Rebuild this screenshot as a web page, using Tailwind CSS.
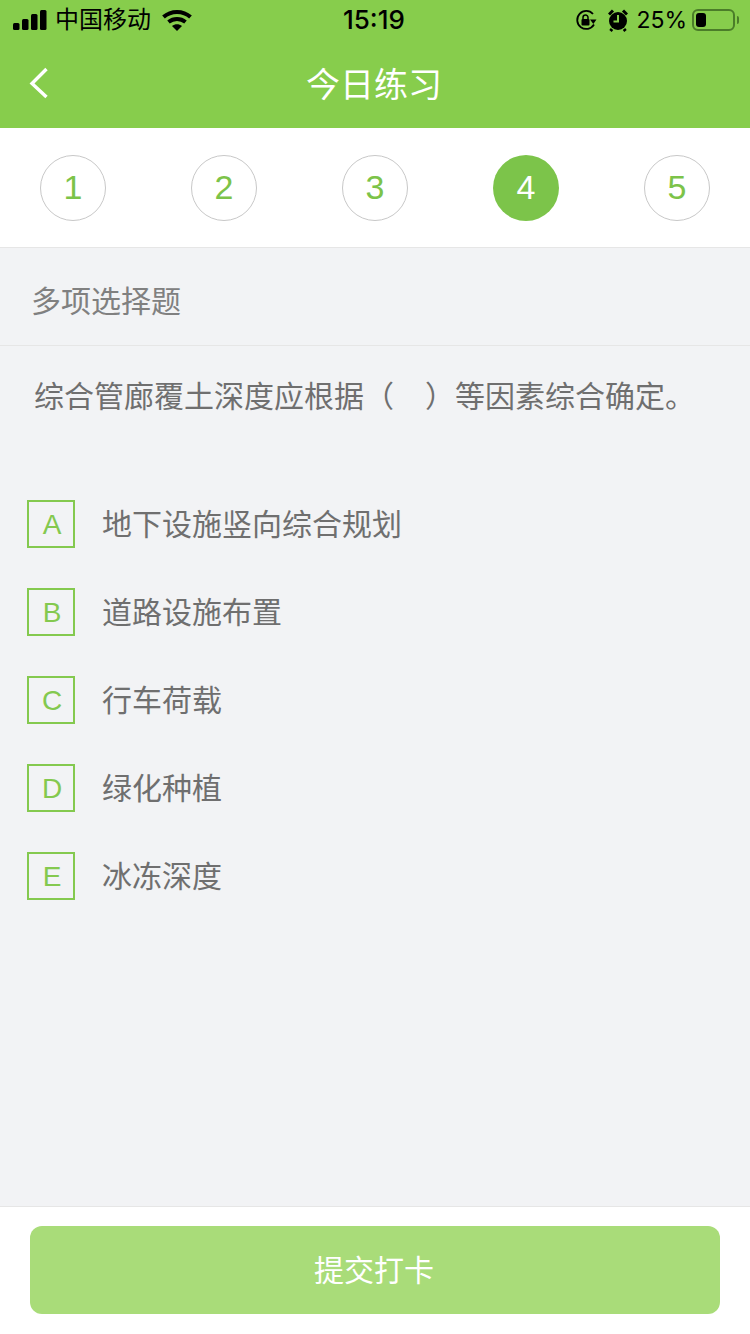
<!DOCTYPE html>
<html>
  <head>
    <meta charset="UTF-8" />
    <meta name="viewport" content="width=device-width, initial-scale=1.0" />
    <script src="https://cdn.jsdelivr.net/npm/@tailwindcss/browser@4"></script>
  </head>
  <body class="font-['Liberation_Sans','Noto_Sans_CJK_SC',sans-serif]">
    <div class="flex flex-col w-[750px] h-[1334px] bg-[#f2f3f5] overflow-hidden">
      <!-- Header -->
      <div class="bg-[#87cd4c] h-[128px] shrink-0">
        <!-- Status bar -->
        <div class="relative flex items-center justify-between h-[40px] pl-[13px] pr-[15px] text-black font-['Inter','Noto_Sans_CJK_SC',sans-serif]">
          <div class="flex items-center">
            <svg width="34" height="20" viewBox="0 0 34 20" fill="#000">
              <rect x="0" y="13" width="6.5" height="7" rx="1.5" />
              <rect x="9" y="9" width="6.5" height="11" rx="1.5" />
              <rect x="18" y="4" width="6.5" height="16" rx="1.5" />
              <rect x="27" y="0" width="6.5" height="20" rx="1.5" />
            </svg>
            <span class="ml-[8px] text-[24px] leading-[30px]">中国移动</span>
            <svg class="ml-[11px]" width="30" height="22" viewBox="0 0 30 22" fill="none" stroke="#000" stroke-width="4">
              <path d="M1.5 8C9 1.2 21 1.2 28.5 8" />
              <path d="M6.5 13C11.5 9 18.5 9 23.5 13" />
              <path d="M10 17L15 22L20 17C17 14.5 13 14.5 10 17Z" fill="#000" stroke="none" />
            </svg>
          </div>
          <span class="absolute left-[343px] top-[5px] text-[26px] leading-[30px] font-medium">15:19</span>
          <div class="flex items-center">
            <svg width="22" height="22" viewBox="0 0 22 22" fill="none" stroke="#000" stroke-width="1.8">
              <path d="M18 5A9 9 0 1 0 19 15.5" />
              <path d="M15 10.5L21.5 10.5L18.3 15Z" fill="#000" stroke="none" />
              <rect x="6.5" y="10" width="8" height="6.5" rx="1" fill="#000" stroke="none" />
              <path d="M8 10V8.5A2.5 2.5 0 0 1 13 8.5V10" stroke-width="1.5" />
            </svg>
            <svg class="ml-[11px]" width="20" height="24" viewBox="0 0 20 24">
              <circle cx="10" cy="13" r="9" fill="#000" />
              <path d="M10 7V13.5H5.5" fill="none" stroke="#87cd4c" stroke-width="2" />
              <path d="M1 6.5L5 2.5M19 6.5L15 2.5M4 21L2.5 23M16 21L17.5 23" stroke="#000" stroke-width="3" />
            </svg>
            <span class="ml-[8px] text-[23px] leading-[30px]">25%</span>
            <div class="relative ml-[5px] w-[43px] h-[22px] rounded-[6px] border-2 border-[#4b7d29] p-[2px]">
              <div class="w-[10px] h-full rounded-[3px] bg-black"></div>
              <div class="absolute left-[43px] top-[5px] w-[2px] h-[8px] rounded-r-[2px] bg-[#4b7d29]"></div>
            </div>
          </div>
        </div>
        <!-- Nav bar -->
        <div class="relative flex items-center justify-center h-[88px]">
          <svg class="absolute left-[29px] top-[27px]" width="20" height="32" viewBox="0 0 20 32" fill="none" stroke="#fff" stroke-width="3.4">
            <path d="M17.5 2L3 16.5L17.5 30" />
          </svg>
          <span class="pr-[2px] pt-[2px] text-white text-[34px] leading-[44px]">今日练习</span>
        </div>
      </div>

      <!-- Step circles -->
      <div class="flex items-center justify-between h-[120px] px-[40px] bg-white border-b border-[#e6e6e6] shrink-0">
        <div class="flex items-center justify-center w-[66px] h-[66px] rounded-full border border-[#c8c8c8] text-[#7cc349] text-[34px]">1</div>
        <div class="flex items-center justify-center w-[66px] h-[66px] rounded-full border border-[#c8c8c8] text-[#7cc349] text-[34px]">2</div>
        <div class="flex items-center justify-center w-[66px] h-[66px] rounded-full border border-[#c8c8c8] text-[#7cc349] text-[34px]">3</div>
        <div class="flex items-center justify-center w-[66px] h-[66px] rounded-full bg-[#7cc44a] text-white text-[34px]">4</div>
        <div class="flex items-center justify-center w-[66px] h-[66px] rounded-full border border-[#c8c8c8] text-[#7cc349] text-[34px]">5</div>
      </div>

      <!-- Question type -->
      <div class="flex items-center h-[98px] pt-[10px] pl-[31px] border-b border-[#e6e6e6] text-[#808080] text-[30px] shrink-0">多项选择题</div>

      <!-- Question -->
      <div class="pl-[34px] pt-[29px] h-[154px] text-[#6f6f6f] text-[30px] leading-[44px] shrink-0">综合管廊覆土深度应根据（<span class="inline-block w-[31px]"></span>）等因素综合确定。</div>

      <!-- Options -->
      <div class="flex flex-col flex-1 gap-[40px] pl-[27px]">
        <div class="flex items-center">
          <div class="flex items-center justify-center w-[48px] h-[48px] pl-[2px] pt-[2px] border-2 border-[#84c94f] text-[#84c94f] text-[28px]">A</div>
          <span class="ml-[27px] text-[#6f6f6f] text-[30px]">地下设施竖向综合规划</span>
        </div>
        <div class="flex items-center">
          <div class="flex items-center justify-center w-[48px] h-[48px] pl-[2px] pt-[2px] border-2 border-[#84c94f] text-[#84c94f] text-[28px]">B</div>
          <span class="ml-[27px] text-[#6f6f6f] text-[30px]">道路设施布置</span>
        </div>
        <div class="flex items-center">
          <div class="flex items-center justify-center w-[48px] h-[48px] pl-[2px] pt-[2px] border-2 border-[#84c94f] text-[#84c94f] text-[28px]">C</div>
          <span class="ml-[27px] text-[#6f6f6f] text-[30px]">行车荷载</span>
        </div>
        <div class="flex items-center">
          <div class="flex items-center justify-center w-[48px] h-[48px] pl-[2px] pt-[2px] border-2 border-[#84c94f] text-[#84c94f] text-[28px]">D</div>
          <span class="ml-[27px] text-[#6f6f6f] text-[30px]">绿化种植</span>
        </div>
        <div class="flex items-center">
          <div class="flex items-center justify-center w-[48px] h-[48px] pl-[2px] pt-[2px] border-2 border-[#84c94f] text-[#84c94f] text-[28px]">E</div>
          <span class="ml-[27px] text-[#6f6f6f] text-[30px]">冰冻深度</span>
        </div>
      </div>

      <!-- Submit -->
      <div class="h-[128px] pt-[19px] px-[30px] bg-white border-t border-[#e6e6e6] shrink-0">
        <div class="flex items-center justify-center h-[88px] pr-[2px] rounded-[12px] bg-[#a9dc79] text-white text-[30px]">提交打卡</div>
      </div>
    </div>
  </body>
</html>
